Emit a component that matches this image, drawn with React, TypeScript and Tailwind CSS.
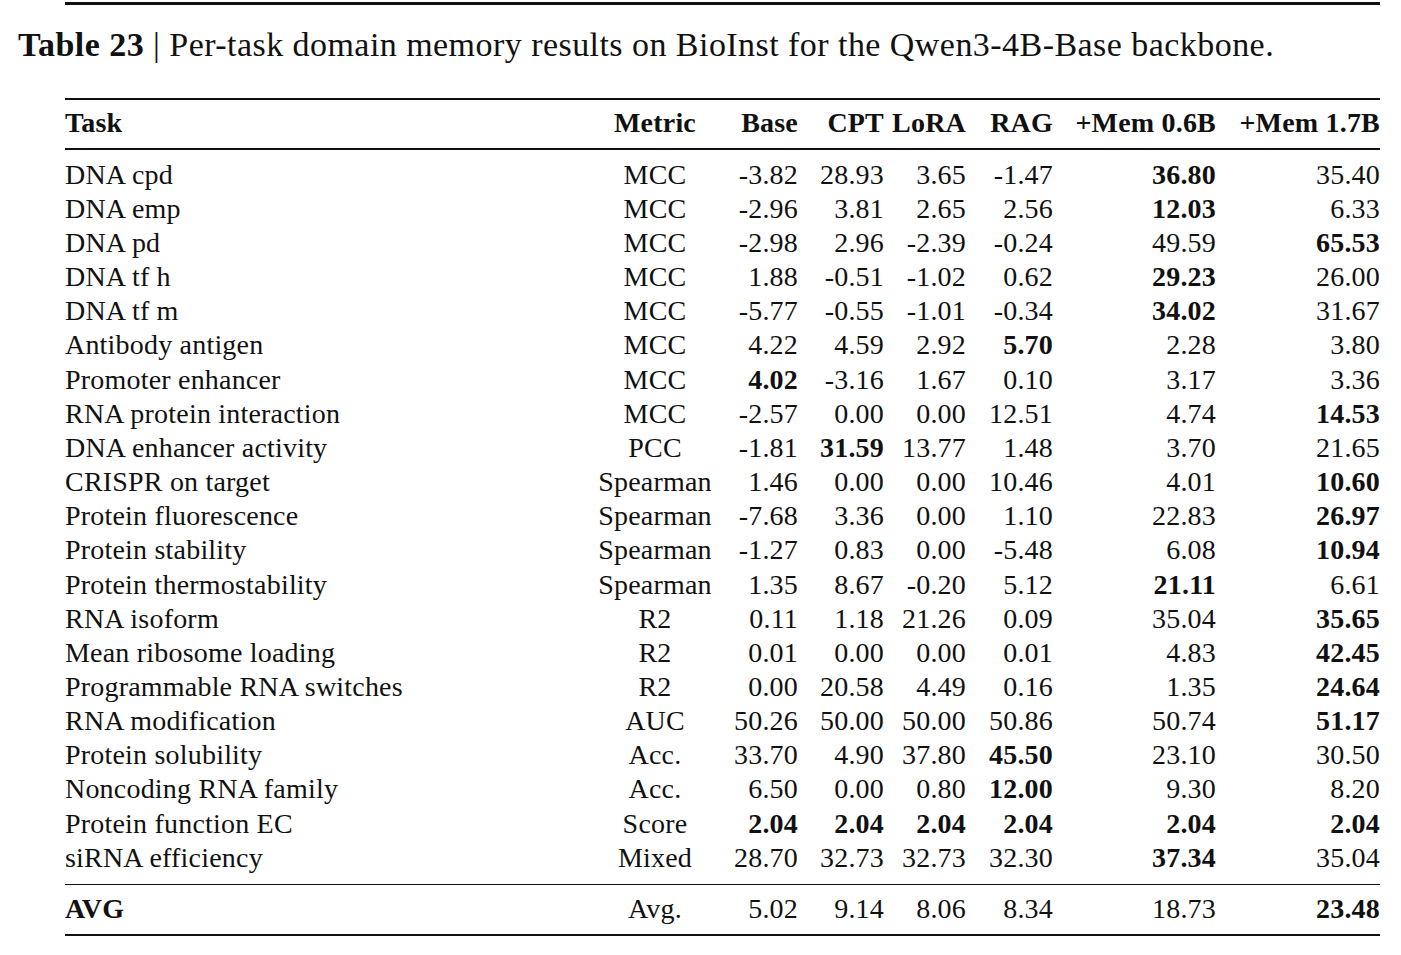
const rows: string[][] = [
  ['DNA cpd', 'MCC', '-3.82', '28.93', '3.65', '-1.47', '*36.80', '35.40'],
  ['DNA emp', 'MCC', '-2.96', '3.81', '2.65', '2.56', '*12.03', '6.33'],
  ['DNA pd', 'MCC', '-2.98', '2.96', '-2.39', '-0.24', '49.59', '*65.53'],
  ['DNA tf h', 'MCC', '1.88', '-0.51', '-1.02', '0.62', '*29.23', '26.00'],
  ['DNA tf m', 'MCC', '-5.77', '-0.55', '-1.01', '-0.34', '*34.02', '31.67'],
  ['Antibody antigen', 'MCC', '4.22', '4.59', '2.92', '*5.70', '2.28', '3.80'],
  ['Promoter enhancer', 'MCC', '*4.02', '-3.16', '1.67', '0.10', '3.17', '3.36'],
  ['RNA protein interaction', 'MCC', '-2.57', '0.00', '0.00', '12.51', '4.74', '*14.53'],
  ['DNA enhancer activity', 'PCC', '-1.81', '*31.59', '13.77', '1.48', '3.70', '21.65'],
  ['CRISPR on target', 'Spearman', '1.46', '0.00', '0.00', '10.46', '4.01', '*10.60'],
  ['Protein fluorescence', 'Spearman', '-7.68', '3.36', '0.00', '1.10', '22.83', '*26.97'],
  ['Protein stability', 'Spearman', '-1.27', '0.83', '0.00', '-5.48', '6.08', '*10.94'],
  ['Protein thermostability', 'Spearman', '1.35', '8.67', '-0.20', '5.12', '*21.11', '6.61'],
  ['RNA isoform', 'R2', '0.11', '1.18', '21.26', '0.09', '35.04', '*35.65'],
  ['Mean ribosome loading', 'R2', '0.01', '0.00', '0.00', '0.01', '4.83', '*42.45'],
  ['Programmable RNA switches', 'R2', '0.00', '20.58', '4.49', '0.16', '1.35', '*24.64'],
  ['RNA modification', 'AUC', '50.26', '50.00', '50.00', '50.86', '50.74', '*51.17'],
  ['Protein solubility', 'Acc.', '33.70', '4.90', '37.80', '*45.50', '23.10', '30.50'],
  ['Noncoding RNA family', 'Acc.', '6.50', '0.00', '0.80', '*12.00', '9.30', '8.20'],
  ['Protein function EC', 'Score', '*2.04', '*2.04', '*2.04', '*2.04', '*2.04', '*2.04'],
  ['siRNA efficiency', 'Mixed', '28.70', '32.73', '32.73', '32.30', '*37.34', '35.04'],
];

const avg = ['*AVG', 'Avg.', '5.02', '9.14', '8.06', '8.34', '18.73', '*23.48'];
const head = ['Task', 'Metric', 'Base', 'CPT', 'LoRA', 'RAG', '+Mem 0.6B', '+Mem 1.7B'];

function Row({ cells, bold = false }: { cells: string[]; bold?: boolean }) {
  return (
    <div className="grid grid-cols-[520px_140px_73px_86px_82px_87px_163px_164px] leading-[34.15px]">
      {cells.map((c, i) => {
        const b = bold || c.startsWith('*');
        const text = c.replace(/^\*/, '');
        const align = i === 0 ? 'text-left' : i === 1 ? 'text-center' : 'text-right';
        return (
          <div key={i} className={`${align} whitespace-nowrap ${b ? 'font-bold' : 'font-normal'}`}>
            {text}
          </div>
        );
      })}
    </div>
  );
}

export default function App() {
  return (
    <div
      className="w-[1401px] h-[955px] bg-white text-[#111] overflow-hidden"
      style={{ fontFamily: '"Liberation Serif", serif' }}
    >
      <div className="ml-[65px] mr-[21px] pt-[2px]">
        <div className="h-[2.5px] bg-[#111]" />
      </div>
      <p className="ml-[18px] mt-[21px] text-[34px] leading-[38px] tracking-[0.45px] whitespace-nowrap">
        <span className="font-bold">Table 23</span> | Per-task domain memory results on BioInst for the Qwen3-4B-Base backbone.
      </p>
      <div className="ml-[65px] mr-[21px] mt-[34px] text-[28px] tracking-[0.2px]">
        <div className="h-[2.5px] bg-[#111]" />
        <div className="pt-[6px] pb-[8px]">
          <Row cells={head} bold />
        </div>
        <div className="h-[1.5px] bg-[#111]" />
        <div className="pt-[8px] pb-[9px]">
          {rows.map((r, i) => (
            <Row key={i} cells={r} />
          ))}
        </div>
        <div className="h-[1.5px] bg-[#111]" />
        <div className="pt-[7px] pb-[7px]">
          <Row cells={avg} />
        </div>
        <div className="h-[2.5px] bg-[#111]" />
      </div>
    </div>
  );
}
